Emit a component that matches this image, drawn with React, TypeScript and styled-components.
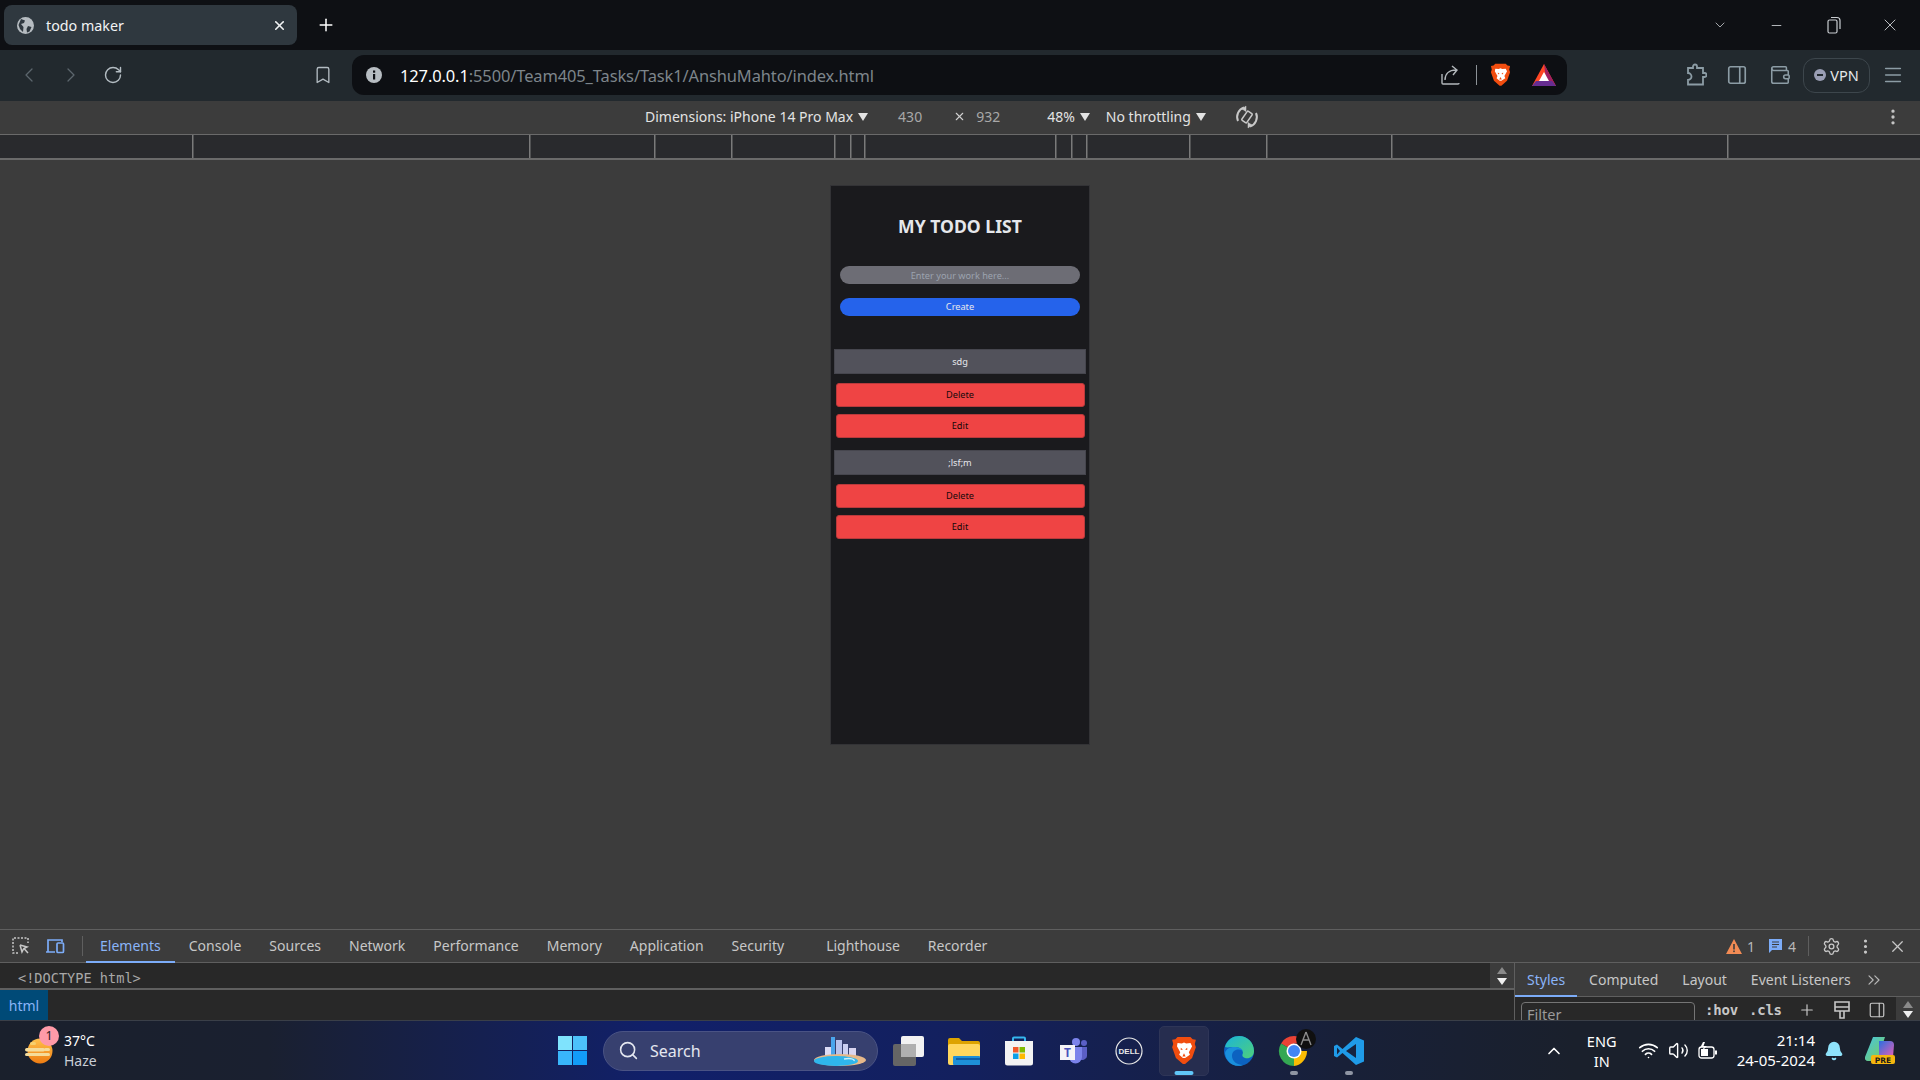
import React from "react";
import styled, { createGlobalStyle } from "styled-components";
import {
  Bell,
  Bookmark,
  ChevronDown,
  ChevronLeft,
  ChevronRight,
  ChevronsRight,
  ChevronUp,
  EllipsisVertical,
  Menu,
  Minus,
  PanelRight,
  Plus,
  RotateCw,
  Search,
  Settings,
  Volume2,
  Wallet,
  Wifi,
  X,
} from "lucide-react";

const UI_FONT = `"Noto Sans", "Open Sans", sans-serif`;
const MONO_FONT = `"DejaVu Sans Mono", "Liberation Mono", monospace`;

const GlobalStyle = createGlobalStyle`
  html, body {
    margin: 0;
    padding: 0;
    background: #3c3c3c;
    overflow: hidden;
  }
  * {
    box-sizing: border-box;
  }
`;

const Page = styled.div`
  width: 1920px;
  height: 1080px;
  display: flex;
  flex-direction: column;
  font-family: ${UI_FONT};
  overflow: hidden;
`;

/* ---------- browser tabs ---------- */

const TabStrip = styled.div`
  height: 50px;
  background: #0e1014;
  display: flex;
  align-items: center;
  padding-left: 4px;
  padding-right: 2px;
  color: #fff;
`;

const BrowserTab = styled.div`
  width: 293px;
  height: 40px;
  background: #2f383f;
  border-radius: 8px;
  display: flex;
  align-items: center;
  padding: 0 10px 0 13px;
  font-size: 14.3px;
  color: #f1f3f4;
`;

const TabTitle = styled.span`
  flex: 1;
  margin-left: 12px;
`;

const NewTab = styled.div`
  margin-left: 19px;
  display: flex;
`;

const WindowControls = styled.div`
  margin-left: auto;
  display: flex;
  align-items: center;
  color: #c9cdd1;
`;

const WindowButton = styled.div<{ $width: number }>`
  width: ${(p) => p.$width}px;
  display: flex;
  justify-content: center;
`;

/* ---------- toolbar ---------- */

const Toolbar = styled.div`
  height: 51px;
  background: #22292e;
  display: flex;
  align-items: center;
  padding-left: 17px;
  padding-bottom: 1px;
`;

const NavButton = styled.div<{ $off?: boolean; $width?: number; $left?: number; $tone?: string }>`
  width: ${(p) => p.$width ?? 42}px;
  margin-left: ${(p) => p.$left ?? 0}px;
  display: flex;
  justify-content: center;
  color: ${(p) => p.$tone ?? (p.$off ? "#5c666d" : "#b3bcc2")};
`;

const AddressBar = styled.div`
  width: 1215px;
  height: 40px;
  margin-left: 8px;
  background: #0d0f13;
  border-radius: 12px;
  display: flex;
  align-items: center;
  padding-left: 14px;
`;

const Url = styled.div`
  margin-left: 18px;
  flex: 1;
  font-size: 16.45px;
  color: #7d858b;
  white-space: nowrap;
  letter-spacing: -0.1px;
`;

const UrlHost = styled.span`
  color: #fff;
`;

const AddressIcons = styled.div`
  display: flex;
  align-items: center;
  padding-right: 11px;
`;

const AddressDivider = styled.div`
  width: 1px;
  height: 20px;
  background: #8c9297;
  margin: 0 13px 0 15px;
`;

const AddressGap = styled.span`
  width: 21px;
`;

const ToolIcons = styled.div`
  display: flex;
  align-items: center;
  margin-left: 118px;
  color: #8c9ca5;
`;

const VpnPill = styled.div`
  width: 67px;
  height: 35px;
  margin-left: 2px;
  border: 1px solid #3d464c;
  border-radius: 12px;
  display: flex;
  align-items: center;
  justify-content: center;
  gap: 4px;
  font-size: 14.5px;
  color: #e6e9eb;
`;

const VpnDot = styled.span`
  width: 12px;
  height: 12px;
  border-radius: 50%;
  background: #9a9eb4;
  position: relative;
  &::after {
    content: "";
    position: absolute;
    left: 3px;
    right: 3px;
    top: 5px;
    height: 2px;
    background: #22292e;
  }
`;

/* ---------- device toolbar ---------- */

const DeviceBar = styled.div`
  height: 33px;
  background: #3c3c3c;
  display: flex;
  align-items: center;
  padding-left: 645px;
  padding-bottom: 2px;
  font-size: 14px;
  color: #e3e3e3;
`;

const Caret = styled.span`
  margin-left: 5px;
  width: 0;
  height: 0;
  border-left: 5px solid transparent;
  border-right: 5px solid transparent;
  border-top: 8px solid #e3e3e3;
`;

const SizeValue = styled.span<{ $left: number }>`
  margin-left: ${(p) => p.$left}px;
  color: #a8a8a8;
`;

const DeviceText = styled.span<{ $left: number }>`
  margin-left: ${(p) => p.$left}px;
`;

const DeviceGlyph = styled.span<{ $left: number }>`
  margin-left: ${(p) => p.$left}px;
  display: flex;
`;

const DeviceEnd = styled.div`
  margin-left: auto;
  width: 54px;
  display: flex;
  justify-content: center;
  color: #c4c4c4;
`;

const RulerBar = styled.div`
  height: 26px;
  background: #292a2d;
  border-top: 1px solid #6a6a6a;
  border-bottom: 2px solid #6a6a6a;
  line-height: 0;
`;

/* ---------- emulated phone ---------- */

const Viewport = styled.div`
  flex: 1;
  min-height: 0;
  background: #3c3c3c;
  display: flex;
  justify-content: center;
  align-items: flex-start;
  padding-top: 25px;
`;

const Phone = styled.div`
  width: 260px;
  height: 560px;
  background: #1a1a1d;
  border: 1px solid #333336;
  display: flex;
  flex-direction: column;
  align-items: center;
`;

const Title = styled.h1`
  margin: 28px 0 0;
  height: 24px;
  line-height: 24px;
  font-size: 17.6px;
  font-weight: 700;
  color: #e5e7eb;
`;

const TodoInput = styled.div`
  width: 240px;
  height: 18px;
  margin-top: 28px;
  background: #6d6d75;
  border-radius: 9px;
  text-align: center;
  font-size: 9.2px;
  line-height: 19px;
  color: #9ca3af;
`;

const CreateButton = styled.div`
  width: 240px;
  height: 18px;
  margin-top: 14px;
  background: #2563eb;
  border-radius: 9px;
  text-align: center;
  font-size: 9.2px;
  line-height: 18px;
  color: #e5e7eb;
`;

const TodoList = styled.div`
  margin-top: 33px;
  display: flex;
  flex-direction: column;
  align-items: center;
`;

const TodoItem = styled.div`
  width: 252px;
  height: 25px;
  background: #52525b;
  border: 1px solid #46464e;
  text-align: center;
  font-size: 9.2px;
  line-height: 23px;
  color: #e5e7eb;
`;

const RedButton = styled.div<{ $top: number }>`
  width: 249px;
  height: 24px;
  margin-top: ${(p) => p.$top}px;
  background: #ef4444;
  border: 1px solid #b93a3c;
  border-radius: 3px;
  text-align: center;
  font-size: 9.2px;
  line-height: 22px;
  color: #15080a;
`;

const TodoGroup = styled.div`
  display: flex;
  flex-direction: column;
  align-items: center;
  margin-bottom: 12px;
`;

/* ---------- devtools ---------- */

const DevTools = styled.div`
  height: 91px;
  background: #3c3c3c;
  border-top: 1px solid #5f5f5f;
  color: #c7c7c7;
  font-size: 14px;
  display: flex;
  flex-direction: column;
`;

const MainTabs = styled.div`
  height: 33px;
  display: flex;
  align-items: stretch;
  border-bottom: 1px solid #5f5f5f;
  flex: none;
`;

const ToolGlyphs = styled.div`
  width: 86px;
  display: flex;
  align-items: center;
  padding-left: 11px;
  gap: 14px;
`;

const Separator = styled.span<{ $left?: number }>`
  width: 1px;
  height: 20px;
  margin-left: ${(p) => p.$left ?? 0}px;
  background: #5f5f5f;
`;

const PanelTab = styled.div<{ $active?: boolean; $left?: number; $pad?: number }>`
  padding: 0 ${(p) => p.$pad ?? 14}px;
  margin-left: ${(p) => p.$left ?? 0}px;
  display: flex;
  align-items: center;
  position: relative;
  color: ${(p) => (p.$active ? "#8ab4f8" : "#c7c7c7")};
  border-bottom: 2px solid ${(p) => (p.$active ? "#7cacf8" : "transparent")};
  margin-bottom: -1px;
  white-space: nowrap;
`;

const MainTabsEnd = styled.div`
  margin-left: auto;
  display: flex;
  align-items: center;
  padding-right: 13px;
  gap: 0;
`;

const IssueCount = styled.span<{ $right: number }>`
  margin: 0 ${(p) => p.$right}px 0 5px;
  color: #b8b8b8;
`;

const EndIcon = styled.span<{ $left: number }>`
  margin-left: ${(p) => p.$left}px;
  display: flex;
`;

const Panes = styled.div`
  flex: 1;
  min-height: 0;
  display: flex;
`;

const ElementsPane = styled.div`
  width: 1514px;
  display: flex;
  flex-direction: column;
  background: #282828;
`;

const SourceRow = styled.div`
  height: 27px;
  border-bottom: 2px solid #5f5f5f;
  background: #282828;
  display: flex;
  align-items: center;
  padding-left: 18px;
  font-family: ${MONO_FONT};
  font-size: 13.6px;
  color: #a8a8a8;
`;

const SourceText = styled.span`
  padding-top: 4px;
`;

const ScrollArrows = styled.div`
  margin-left: auto;
  width: 24px;
  height: 100%;
  background: #3c3c3c;
  display: flex;
  flex-direction: column;
  align-items: center;
  justify-content: center;
  gap: 4px;
`;

const ArrowUp = styled.span<{ $tone: string }>`
  width: 0;
  height: 0;
  border-left: 5px solid transparent;
  border-right: 5px solid transparent;
  border-bottom: 7px solid ${(p) => p.$tone};
`;

const ArrowDown = styled.span<{ $tone: string }>`
  width: 0;
  height: 0;
  border-left: 5px solid transparent;
  border-right: 5px solid transparent;
  border-top: 7px solid ${(p) => p.$tone};
`;

const Breadcrumb = styled.div`
  flex: 1;
  display: flex;
  align-items: stretch;
`;

const CrumbChip = styled.div`
  width: 48px;
  background: #004a77;
  color: #8ab4f8;
  display: flex;
  align-items: center;
  justify-content: center;
`;

const StylesPane = styled.div`
  flex: 1;
  display: flex;
  flex-direction: column;
  border-left: 1px solid #5f5f5f;
  min-width: 0;
`;

const StyleTabs = styled.div`
  height: 34px;
  display: flex;
  align-items: stretch;
  border-bottom: 1px solid #5f5f5f;
  flex: none;
`;

const OverflowTab = styled.div`
  display: flex;
  align-items: center;
  margin-left: 1px;
  color: #b8b8b8;
`;

const FilterRow = styled.div`
  flex: 1;
  min-height: 0;
  overflow: hidden;
  background: #282828;
  display: flex;
  align-items: flex-start;
`;

const FilterBox = styled.div`
  width: 174px;
  height: 30px;
  margin: 5px 0 0 6px;
  border: 1px solid #757575;
  border-radius: 4px;
  padding: 1px 5px;
  color: #9a9a9a;
  font-size: 14.5px;
  flex: none;
`;

const StyleAction = styled.span<{ $left: number }>`
  margin: 5px 0 0 ${(p) => p.$left}px;
  font-family: ${MONO_FONT};
  font-weight: 700;
  font-size: 14px;
  letter-spacing: -0.2px;
  color: #c7c7c7;
  flex: none;
`;

const ActionIcon = styled.span<{ $left: number }>`
  margin: 4px 0 0 ${(p) => p.$left}px;
  color: #c7c7c7;
  display: flex;
  flex: none;
`;

const StylesScroll = styled.div`
  margin-left: auto;
  width: 24px;
  height: 100%;
  background: #3c3c3c;
  display: flex;
  flex-direction: column;
  align-items: center;
  gap: 3px;
  padding-top: 4px;
  flex: none;
`;

/* ---------- windows taskbar ---------- */

const Taskbar = styled.div`
  height: 60px;
  border-top: 1px solid #3a3f48;
  background: linear-gradient(
    90deg,
    #1a202c 0%,
    #1a2030 14%,
    #11206a 34%,
    #13205e 50%,
    #182038 70%,
    #1a202c 82%
  );
  display: flex;
  align-items: center;
  color: #fff;
`;

const Weather = styled.div`
  width: 558px;
  flex: none;
  display: flex;
  align-items: center;
  padding-left: 25px;
`;

const WeatherIcon = styled.div`
  position: relative;
  width: 28px;
  height: 28px;
  display: flex;
`;

const WeatherBadge = styled.span`
  position: absolute;
  left: 14px;
  top: -11px;
  width: 20px;
  height: 20px;
  border-radius: 50%;
  background: #ff9aa8;
  color: #2a1a1e;
  font-size: 12.5px;
  line-height: 20px;
  text-align: center;
`;

const WeatherText = styled.div`
  margin-left: 11px;
  font-size: 14px;
  line-height: 20px;
`;

const WeatherSub = styled.div`
  color: #c9ced6;
`;

const StartButton = styled.div`
  width: 29px;
  height: 29px;
  flex: none;
  display: grid;
  grid-template-columns: 1fr 1fr;
  grid-template-rows: 1fr 1fr;
  gap: 1.5px;
`;

const StartPane = styled.span<{ $tone: string }>`
  background: ${(p) => p.$tone};
`;

const SearchPill = styled.div`
  width: 275px;
  height: 40px;
  margin-left: 16px;
  flex: none;
  border-radius: 20px;
  background: #37406f;
  border: 1px solid #4a5384;
  display: flex;
  align-items: center;
  padding: 0 11px 0 14px;
  font-size: 16px;
  color: #e4e7f0;
`;

const SearchLabel = styled.span`
  margin-left: 11px;
  flex: 1;
`;

const AppSlot = styled.div<{ $active?: boolean }>`
  width: 50px;
  height: 50px;
  margin-right: 5px;
  flex: none;
  border-radius: 5px;
  position: relative;
  display: flex;
  align-items: center;
  justify-content: center;
  background: ${(p) => (p.$active ? "#262d4f" : "transparent")};
  border: 1px solid ${(p) => (p.$active ? "#2e3557" : "transparent")};
`;

const AppDot = styled.span<{ $active?: boolean }>`
  position: absolute;
  left: 50%;
  bottom: 0;
  transform: translateX(-50%);
  width: ${(p) => (p.$active ? 19 : 8)}px;
  height: 3.5px;
  border-radius: 2px;
  background: ${(p) => (p.$active ? "#60c6f8" : "#8f95a3")};
`;

const AppRow = styled.div`
  margin-left: 6px;
  display: flex;
  align-items: center;
`;

const Tray = styled.div`
  margin-left: auto;
  display: flex;
  align-items: center;
  padding-right: 25px;
`;

const Language = styled.div`
  width: 58px;
  margin-left: 9px;
  text-align: center;
  font-size: 14.5px;
  line-height: 20px;
`;

const TrayIcon = styled.span<{ $left: number }>`
  margin-left: ${(p) => p.$left}px;
  display: flex;
`;

const Clock = styled.div`
  margin-left: 19px;
  margin-top: -2px;
  text-align: right;
  font-size: 15px;
  line-height: 20px;
`;

const RULER_TICKS = [192, 529, 654, 731, 834, 850, 864, 1055, 1071, 1086, 1189, 1266, 1391, 1727];
const PANEL_TABS = ["Console", "Sources", "Network", "Performance", "Memory", "Application", "Security"];

function BraveLogo({ size }: { size: number }) {
  return (
    <svg width={size} height={size * 1.12} viewBox="0 0 24 27">
      <path
        d="M6 1h12l2 2 3 .5-1 4 1 3-3.500 10L13 26h-2l-6.500-5.500L1 10.500l1-3-1-4L4 3z"
        fill="#f14d0f"
      />
      <path
        d="M6 6.500 10 7l2-1 2 1 4-.5 1.500 3-3 5.500 1 2.500L13 20.500h-2L7.500 17.500l1-2.500-3-5.500z"
        fill="#fff"
      />
      <path d="M9 11l2 1.500-2 .5zM15 11l-2 1.500 2 .5zM10.500 19l1.500-3 1.500 3z" fill="#f14d0f" />
    </svg>
  );
}

function BatLogo() {
  return (
    <svg width="24" height="22" viewBox="0 0 24 22">
      <path d="M12 0 24 22H0z" fill="#ff4724" />
      <path d="M12 0 24 22H15z" fill="#9e1f63" />
      <path d="M0 22h24l-4-5H4z" fill="#662d91" />
      <path d="M12 8l5 9H7z" fill="#fff" />
    </svg>
  );
}

function RestoreIcon() {
  return (
    <svg width="14" height="18" viewBox="0 0 14 18" fill="none" stroke="currentColor" strokeWidth="1.200">
      <rect x="1" y="4" width="9" height="13" rx="1.500" />
      <path d="M4 1.500h6a3 3 0 0 1 3 3V13" />
    </svg>
  );
}

function ShareArrow() {
  return (
    <svg width="20" height="20" viewBox="0 0 20 20" fill="none" stroke="#b3b8bc" strokeWidth="1.400">
      <path d="M1 9v9a1 1 0 0 0 1 1h15a1 1 0 0 0 1-1" />
      <path d="M4 15c0-6 4-10 11-10M11 1l5 4-4 5" />
    </svg>
  );
}

function PuzzleIcon() {
  return (
    <svg width="22" height="24" viewBox="0 0 22 24" fill="none" stroke="currentColor" strokeWidth="1.800">
      <path d="M3 5h5V3.500a2 2 0 0 1 4 0V5h6v5h1.500a2 2 0 0 1 0 4H18v7.500H3V17a3.500 3.500 0 0 0 0-7z" />
    </svg>
  );
}

function GlobeFavicon() {
  return (
    <svg width="17" height="17" viewBox="0 0 17 17">
      <circle cx="8.500" cy="8.500" r="8.500" fill="#b6bcc1" />
      <path
        d="M4 2 8 3.500 7 6 4 7 6.500 10 6 15 3 12 1.500 8zM11 9l3.500 1-2 4.500L10 15.500 9.500 12z"
        fill="#2f383f"
      />
    </svg>
  );
}

function InfoBadge() {
  return (
    <svg width="16" height="16" viewBox="0 0 16 16">
      <circle cx="8" cy="8" r="8" fill="#b7bdc2" />
      <rect x="7" y="7" width="2.200" height="5.500" fill="#0d0f13" />
      <rect x="7" y="3.500" width="2.200" height="2.200" fill="#0d0f13" />
    </svg>
  );
}

function RotateDevice() {
  return (
    <svg width="24" height="24" viewBox="0 0 24 24" fill="none" stroke="#c8c8c8">
      <rect x="9" y="6.500" width="6" height="11" rx="1" transform="rotate(35 12 12)" strokeWidth="1.500" />
      <path d="M3 16A10 10 0 0 1 9 2.500M21 8A10 10 0 0 1 15 21.500" strokeWidth="2" />
      <path d="M11 1 7 4l4 2.500zM13 23l4-3-4-2.500z" fill="#c8c8c8" strokeWidth="0.500" />
    </svg>
  );
}

function InspectIcon() {
  return (
    <svg width="20" height="20" viewBox="0 0 20 20" fill="none" stroke="#c7c7c7" strokeWidth="1.500">
      <path d="M7 17H2V2h15v5" strokeDasharray="2 1.500" />
      <path d="M9 9l7 2-3 1.500 4 4.500M9 9l2 7 1.500-3" />
    </svg>
  );
}

function DeviceIcon() {
  return (
    <svg width="20" height="20" viewBox="0 0 20 20" fill="none" stroke="#7cacf8" strokeWidth="1.700">
      <path d="M1 16h9M3 16V4h14v2" />
      <rect x="12" y="7" width="6.500" height="9.500" rx="1" />
    </svg>
  );
}

function WarningIcon() {
  return (
    <svg width="16" height="15" viewBox="0 0 16 15">
      <path d="M8 0l8 15H0z" fill="#f28b54" />
      <rect x="7.200" y="5" width="1.600" height="5.500" fill="#3c3c3c" />
      <rect x="7.200" y="11.500" width="1.600" height="1.600" fill="#3c3c3c" />
    </svg>
  );
}

function ChatIcon() {
  return (
    <svg width="15" height="16" viewBox="0 0 15 16">
      <path d="M1 1h13v11H4l-3 3z" fill="#7cacf8" />
      <path d="M4 4h7M4 6.500h7M4 9h5" stroke="#3c3c3c" strokeWidth="1.100" />
    </svg>
  );
}

function StylePaintIcon() {
  return (
    <svg width="18" height="18" viewBox="0 0 18 18" fill="none" stroke="#c7c7c7" strokeWidth="1.600">
      <path d="M2 1h14v9H2z" />
      <path d="M2 6h14M7 10v7h4v-7" />
    </svg>
  );
}

function WeatherGlyph() {
  return (
    <svg width="28" height="28" viewBox="0 0 28 28">
      <defs>
        <linearGradient id="sunFill" x1="0" y1="0" x2="0" y2="1">
          <stop offset="0" stopColor="#ffc24b" />
          <stop offset="1" stopColor="#ee7c12" />
        </linearGradient>
      </defs>
      <circle cx="15" cy="14" r="12.500" fill="url(#sunFill)" />
      <rect x="5" y="5" width="6" height="3" rx="1.500" fill="#f7cf6d" />
      <rect y="11" width="20" height="3.500" rx="1.700" fill="#f5dc9a" />
      <rect y="16" width="25" height="3" rx="1.500" fill="#f5dc9a" />
      <rect x="19" y="11" width="6" height="3" rx="1.500" fill="#f5dc9a" />
    </svg>
  );
}

function SearchArt() {
  return (
    <svg width="52" height="30" viewBox="0 0 52 30">
      <rect x="17" y="1" width="4" height="20" fill="#4aa5ec" />
      <rect x="22" y="4" width="6" height="17" fill="#b9c2ec" />
      <rect x="29" y="8" width="5" height="13" fill="#cbd0f2" />
      <rect x="11" y="11" width="6" height="10" fill="#dcdcf5" />
      <rect x="35" y="12" width="7" height="9" fill="#d9d5ef" />
      <ellipse cx="26" cy="24" rx="26" ry="6" fill="#e7b98a" />
      <ellipse cx="22" cy="25" rx="22" ry="5" fill="#2fb6ec" />
      <path d="M30 23c6-1 11 0 10 2" stroke="#cdeefb" strokeWidth="1.500" fill="none" />
    </svg>
  );
}

function TaskViewIcon() {
  return (
    <svg width="32" height="30" viewBox="0 0 32 30">
      <rect y="8" width="23" height="22" rx="2" fill="#656565" />
      <rect x="8" y="0" width="23" height="21" rx="2" fill="#f2f2f2" />
      <rect x="8" y="8" width="15" height="13" fill="#b0b0b0" />
    </svg>
  );
}

function ExplorerIcon() {
  return (
    <svg width="32" height="28" viewBox="0 0 32 28">
      <path d="M0 3a2 2 0 0 1 2-2h9l3 3h16a2 2 0 0 1 2 2v4H0z" fill="#dda300" />
      <rect y="7" width="32" height="21" rx="2" fill="#ffd75e" />
      <rect x="5" y="19" width="27" height="9" rx="1" fill="#1e90d8" />
      <rect x="8" y="21" width="24" height="2" fill="#0f5fa8" />
    </svg>
  );
}

function StoreIcon() {
  return (
    <svg width="30" height="30" viewBox="0 0 30 30">
      <path d="M9 6V2.500a1 1 0 0 1 1-1h10a1 1 0 0 1 1 1V6" fill="none" stroke="#35b6ee" strokeWidth="2" />
      <path d="M1 5h28v22a2.500 2.500 0 0 1-2.500 2.500h-23A2.500 2.500 0 0 1 1 27z" fill="#f3f3f3" />
      <rect x="9" y="11" width="5.500" height="5.500" fill="#f0592b" />
      <rect x="15.500" y="11" width="5.500" height="5.500" fill="#7fba00" />
      <rect x="9" y="17.500" width="5.500" height="5.500" fill="#0a9fe8" />
      <rect x="15.500" y="17.500" width="5.500" height="5.500" fill="#fdb900" />
    </svg>
  );
}

function TeamsIcon() {
  return (
    <svg width="28" height="26" viewBox="0 0 28 26">
      <circle cx="16" cy="4" r="4" fill="#7b83eb" />
      <circle cx="24" cy="5" r="3" fill="#5b5fc7" />
      <path d="M19 9h8v9a5 5 0 0 1-8 3z" fill="#5b5fc7" />
      <path d="M9 9h13v10a6.500 6.500 0 0 1-13 0z" fill="#7b83eb" />
      <rect y="7" width="15" height="15" fill="#f4f4f8" />
      <text x="7.500" y="19" textAnchor="middle" fontSize="12" fontWeight="700" fill="#4b53bc" fontFamily="Noto Sans">
        T
      </text>
    </svg>
  );
}

function DellIcon() {
  return (
    <svg width="28" height="28" viewBox="0 0 28 28">
      <circle cx="14" cy="14" r="13" fill="none" stroke="#e8e8e8" strokeWidth="1.200" />
      <text x="14" y="16.800" textAnchor="middle" fontSize="8" fontWeight="700" fill="#e8e8e8" fontFamily="Liberation Sans">
        DELL
      </text>
    </svg>
  );
}

function EdgeIcon() {
  return (
    <svg width="30" height="30" viewBox="0 0 30 30">
      <defs>
        <linearGradient id="edgeTop" x1="0" y1="0" x2="1" y2="1">
          <stop offset="0" stopColor="#1bb4d8" />
          <stop offset="1" stopColor="#4fd07a" />
        </linearGradient>
      </defs>
      <circle cx="15" cy="15" r="15" fill="#0c62c0" />
      <path d="M1 11C3 3 10 0 15 0c9 0 15 7 15 15 0 6-5 8-9 7-3-1-3-3-2-5 0-3-3-6-8-6-4 0-8 1-10 0z" fill="url(#edgeTop)" />
      <path d="M19 15c-5-3-11-1-11 5 0 5 5 9 11 9-8 3-17-2-18-12 1-4 5-6 9-6 5 0 8 2 9 4z" fill="#1a8fdc" />
    </svg>
  );
}

function ChromeIcon() {
  return (
    <svg width="30" height="30" viewBox="0 0 30 30" overflow="visible">
      <path d="M15 15 2 7.500A15 15 0 0 1 28 7.500H15z" fill="#ea4335" />
      <path d="M15 15 2 7.500A15 15 0 0 0 15 30z" fill="#34a853" />
      <path d="M15 15h13A15 15 0 0 1 15 30z" fill="#fbbc04" />
      <circle cx="15" cy="15" r="7.500" fill="#fff" />
      <circle cx="15" cy="15" r="6" fill="#4285f4" />
      <circle cx="27" cy="3" r="10" fill="#101010" />
      <path d="M27-4 22 9M27-4 32 9M23.500 4h7" stroke="#8a8a8a" strokeWidth="1.400" fill="none" />
    </svg>
  );
}

function VsCodeIcon() {
  return (
    <svg width="30" height="30" viewBox="0 0 30 30">
      <path d="M22 1 30 4.500v21L22 29 8.500 17 3 21.500 0 20V10l3-1.500L8.500 13z" fill="#1f9be8" />
      <path d="M22 8 12 15l10 7z" fill="#16233f" />
      <path d="M3 11.500 6 15 3 18.500z" fill="#16233f" />
    </svg>
  );
}

function BatteryIcon() {
  return (
    <svg width="20" height="18" viewBox="0 0 20 18" fill="none">
      <rect x="1" y="5" width="15" height="11" rx="2.500" stroke="#fff" strokeWidth="1.300" />
      <rect x="3" y="7" width="7" height="7" fill="#fff" />
      <rect x="17" y="8.500" width="2" height="4" fill="#fff" />
      <path d="M5 0 2.500 5H6l-2 4 5-5H5.500L7 0z" fill="#fff" />
    </svg>
  );
}

function CopilotIcon() {
  return (
    <svg width="30" height="30" viewBox="0 0 30 30">
      <defs>
        <linearGradient id="copA" x1="0" y1="0" x2="1" y2="1">
          <stop offset="0" stopColor="#43c4e8" />
          <stop offset="1" stopColor="#7fcf52" />
        </linearGradient>
        <linearGradient id="copB" x1="0" y1="0" x2="1" y2="1">
          <stop offset="0" stopColor="#2a6fe0" />
          <stop offset="1" stopColor="#e85fb5" />
        </linearGradient>
      </defs>
      <path d="M8 1h12l-8 24H3a3 3 0 0 1-3-4z" fill="url(#copA)" />
      <path d="M14 5h11a4 4 0 0 1 4 4l-1 12H14z" fill="url(#copB)" />
      <rect x="6" y="19" width="24" height="9" rx="2" fill="#f5b60e" />
      <text x="18" y="26.500" textAnchor="middle" fontSize="7.500" fontWeight="700" fill="#1a1a1a" fontFamily="DejaVu Sans">
        PRE
      </text>
    </svg>
  );
}

function TodoEntry({ text }: { text: string }) {
  return (
    <TodoGroup>
      <TodoItem>{text}</TodoItem>
      <RedButton $top={9}>Delete</RedButton>
      <RedButton $top={7}>Edit</RedButton>
    </TodoGroup>
  );
}

export default function App() {
  return (
    <Page>
      <GlobalStyle />

      <TabStrip>
        <BrowserTab>
          <GlobeFavicon />
          <TabTitle>todo maker</TabTitle>
          <X size={15} strokeWidth={2.5} />
        </BrowserTab>
        <NewTab>
          <Plus size={20} strokeWidth={1.8} />
        </NewTab>
        <WindowControls>
          <WindowButton $width={57}>
            <ChevronDown size={16} strokeWidth={1.2} />
          </WindowButton>
          <WindowButton $width={57}>
            <Minus size={15} strokeWidth={1.4} />
          </WindowButton>
          <WindowButton $width={57}>
            <RestoreIcon />
          </WindowButton>
          <WindowButton $width={56}>
            <X size={20} strokeWidth={1.1} />
          </WindowButton>
        </WindowControls>
      </TabStrip>

      <Toolbar>
        <NavButton $off $width={24}>
          <ChevronLeft size={24} strokeWidth={1.3} />
        </NavButton>
        <NavButton $off $left={9}>
          <ChevronRight size={24} strokeWidth={1.3} />
        </NavButton>
        <NavButton>
          <RotateCw size={20} strokeWidth={1.7} />
        </NavButton>
        <NavButton $left={168}>
          <Bookmark size={20} strokeWidth={1.6} />
        </NavButton>
        <AddressBar>
          <InfoBadge />
          <Url>
            <UrlHost>127.0.0.1</UrlHost>:5500/Team405_Tasks/Task1/AnshuMahto/index.html
          </Url>
          <AddressIcons>
            <ShareArrow />
            <AddressDivider />
            <BraveLogo size={21} />
            <AddressGap />
            <BatLogo />
          </AddressIcons>
        </AddressBar>
        <ToolIcons>
          <PuzzleIcon />
          <NavButton $left={9} $tone="#8c9ca5">
            <PanelRight size={22} strokeWidth={1.8} />
          </NavButton>
          <NavButton $left={1} $tone="#8c9ca5">
            <Wallet size={22} strokeWidth={1.7} />
          </NavButton>
          <VpnPill>
            <VpnDot />
            VPN
          </VpnPill>
          <NavButton $width={46} $tone="#8c9ca5">
            <Menu size={22} strokeWidth={1.7} />
          </NavButton>
        </ToolIcons>
      </Toolbar>

      <DeviceBar>
        Dimensions: iPhone 14 Pro Max
        <Caret />
        <SizeValue $left={30}>430</SizeValue>
        <DeviceGlyph $left={31}>
          <X size={13} strokeWidth={2} color="#d0d0d0" />
        </DeviceGlyph>
        <SizeValue $left={10}>932</SizeValue>
        <DeviceText $left={47}>48%</DeviceText>
        <Caret />
        <DeviceText $left={16}>No throttling</DeviceText>
        <Caret />
        <DeviceGlyph $left={29}>
          <RotateDevice />
        </DeviceGlyph>
        <DeviceEnd>
          <EllipsisVertical size={20} />
        </DeviceEnd>
      </DeviceBar>

      <RulerBar>
        <svg width="1920" height="23" viewBox="0 0 1920 23">
          {RULER_TICKS.map((x) => (
            <rect key={x} x={x} y={0} width={1.5} height={23} fill="#7a7a7a" />
          ))}
        </svg>
      </RulerBar>

      <Viewport>
        <Phone>
          <Title>MY TODO LIST</Title>
          <TodoInput>Enter your work here...</TodoInput>
          <CreateButton>Create</CreateButton>
          <TodoList>
            <TodoEntry text="sdg" />
            <TodoEntry text=";lsf;m" />
          </TodoList>
        </Phone>
      </Viewport>

      <DevTools>
        <MainTabs>
          <ToolGlyphs>
            <InspectIcon />
            <DeviceIcon />
            <Separator $left={3} />
          </ToolGlyphs>
          <PanelTab $active>Elements</PanelTab>
          {PANEL_TABS.map((name) => (
            <PanelTab key={name}>{name}</PanelTab>
          ))}
          <PanelTab $left={14}>Lighthouse</PanelTab>
          <PanelTab>Recorder</PanelTab>
          <MainTabsEnd>
            <WarningIcon />
            <IssueCount $right={13}>1</IssueCount>
            <ChatIcon />
            <IssueCount $right={12}>4</IssueCount>
            <Separator />
            <EndIcon $left={13}>
              <Settings size={19} strokeWidth={1.7} />
            </EndIcon>
            <EndIcon $left={15}>
              <EllipsisVertical size={19} />
            </EndIcon>
            <EndIcon $left={13}>
              <X size={19} strokeWidth={1.6} />
            </EndIcon>
          </MainTabsEnd>
        </MainTabs>
        <Panes>
          <ElementsPane>
            <SourceRow>
              <SourceText>&lt;!DOCTYPE html&gt;</SourceText>
              <ScrollArrows>
                <ArrowUp $tone="#8a8a8a" />
                <ArrowDown $tone="#f0f0f0" />
              </ScrollArrows>
            </SourceRow>
            <Breadcrumb>
              <CrumbChip>html</CrumbChip>
            </Breadcrumb>
          </ElementsPane>
          <StylesPane>
            <StyleTabs>
              <PanelTab $active $pad={12}>
                Styles
              </PanelTab>
              <PanelTab $pad={12}>Computed</PanelTab>
              <PanelTab $pad={12}>Layout</PanelTab>
              <PanelTab $pad={12}>Event Listeners</PanelTab>
              <OverflowTab>
                <ChevronsRight size={20} strokeWidth={1.4} />
              </OverflowTab>
            </StyleTabs>
            <FilterRow>
              <FilterBox>Filter</FilterBox>
              <StyleAction $left={10}>:hov</StyleAction>
              <StyleAction $left={11}>.cls</StyleAction>
              <ActionIcon $left={16}>
                <Plus size={18} strokeWidth={1.6} />
              </ActionIcon>
              <ActionIcon $left={17}>
                <StylePaintIcon />
              </ActionIcon>
              <ActionIcon $left={17}>
                <PanelRight size={18} strokeWidth={1.6} />
              </ActionIcon>
              <StylesScroll>
                <ArrowUp $tone="#8a8a8a" />
                <ArrowDown $tone="#f0f0f0" />
              </StylesScroll>
            </FilterRow>
          </StylesPane>
        </Panes>
      </DevTools>

      <Taskbar>
        <Weather>
          <WeatherIcon>
            <WeatherGlyph />
            <WeatherBadge>1</WeatherBadge>
          </WeatherIcon>
          <WeatherText>
            37°C
            <WeatherSub>Haze</WeatherSub>
          </WeatherText>
        </Weather>
        <StartButton>
          <StartPane $tone="#7fe3fd" />
          <StartPane $tone="#4cc2fb" />
          <StartPane $tone="#39b6fb" />
          <StartPane $tone="#129cf8" />
        </StartButton>
        <SearchPill>
          <Search size={21} strokeWidth={1.8} />
          <SearchLabel>Search</SearchLabel>
          <SearchArt />
        </SearchPill>
        <AppRow>
          <AppSlot>
            <TaskViewIcon />
          </AppSlot>
          <AppSlot>
            <ExplorerIcon />
          </AppSlot>
          <AppSlot>
            <StoreIcon />
          </AppSlot>
          <AppSlot>
            <TeamsIcon />
          </AppSlot>
          <AppSlot>
            <DellIcon />
          </AppSlot>
          <AppSlot $active>
            <BraveLogo size={26} />
            <AppDot $active />
          </AppSlot>
          <AppSlot>
            <EdgeIcon />
          </AppSlot>
          <AppSlot>
            <ChromeIcon />
            <AppDot />
          </AppSlot>
          <AppSlot>
            <VsCodeIcon />
            <AppDot />
          </AppSlot>
        </AppRow>
        <Tray>
          <ChevronUp size={20} strokeWidth={2} />
          <Language>
            ENG
            <br />
            IN
          </Language>
          <TrayIcon $left={7}>
            <Wifi size={21} strokeWidth={1.9} />
          </TrayIcon>
          <TrayIcon $left={9}>
            <Volume2 size={21} strokeWidth={1.6} />
          </TrayIcon>
          <TrayIcon $left={9}>
            <BatteryIcon />
          </TrayIcon>
          <Clock>
            21:14
            <br />
            24-05-2024
          </Clock>
          <TrayIcon $left={9}>
            <Bell size={20} fill="#8fe3fb" color="#8fe3fb" />
          </TrayIcon>
          <TrayIcon $left={21}>
            <CopilotIcon />
          </TrayIcon>
        </Tray>
      </Taskbar>
    </Page>
  );
}
